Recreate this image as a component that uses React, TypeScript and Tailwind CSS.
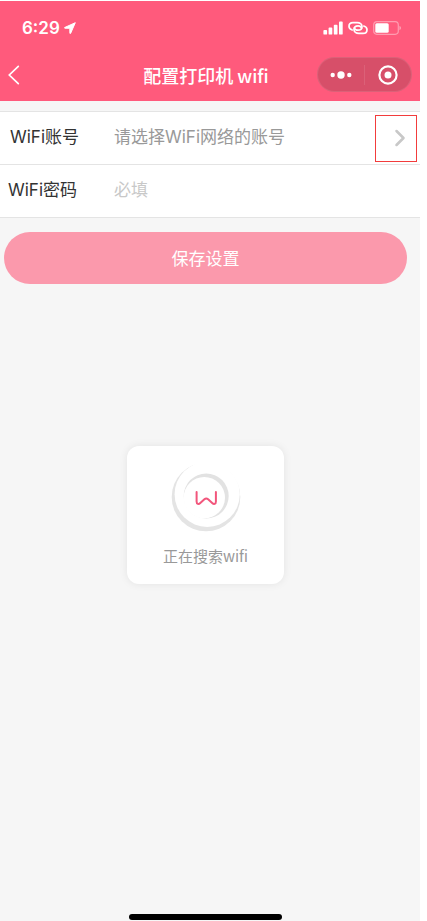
import { ChevronRight } from "lucide-react";

function StatusBar() {
  return (
    <div className="flex h-[54px] items-center justify-between pl-[22px] pr-[11px] text-white">
      <div className="flex items-center gap-1">
        <span className="font-['Inter','Liberation_Sans',sans-serif] text-[17px] font-semibold leading-6">6:29</span>
        <svg width="12" height="12" viewBox="0 0 12 12" fill="currentColor" stroke="currentColor" strokeWidth="1" strokeLinejoin="round" aria-hidden="true">
          <path d="M11.300.7.7 5.500c-.3.200-.3.700.1.700l5 .1.1 5c0 .4.500.4.700.1Z" />
        </svg>
      </div>
      <div className="flex items-center gap-[5px]">
        <svg width="20" height="14" viewBox="0 0 20 14" fill="currentColor" aria-hidden="true">
          <rect x="0.4" y="9" width="3.7" height="4.600" rx="0.9" />
          <rect x="5.600" y="6.600" width="3.700" height="7" rx="0.9" />
          <rect x="10.800" y="3.800" width="3.700" height="9.800" rx="0.9" />
          <rect x="16" y="0.600" width="3.700" height="13" rx="0.9" />
        </svg>
        <svg width="20" height="14" viewBox="0 0 20 14" fill="none" stroke="currentColor" strokeWidth="1.7" strokeLinecap="round" aria-hidden="true">
          <path d="M4.200 9C2.200 8.400 1 7 1 5.300 1 3.100 2.700 1.600 5 1.600h4.200c2.700 0 4.800 1.600 4.800 3.900 0 2.200-1.800 3.700-4.100 3.700-1.700 0-3.100-.8-3.500-2.200" />
          <path d="M15.800 5c2 .6 3.200 2 3.200 3.700 0 2.200-1.700 3.700-4 3.700h-4.200C8.100 12.400 6 10.800 6 8.500c0-2.200 1.800-3.700 4.100-3.700 1.700 0 3.100.8 3.500 2.200" />
        </svg>
        <svg width="28" height="14" viewBox="0 0 28 14" fill="none" aria-hidden="true">
          <rect x="0.7" y="0.7" width="24.600" height="12.600" rx="3.200" stroke="white" strokeOpacity="0.4" strokeWidth="1.2" />
          <rect x="2.300" y="2.300" width="13.400" height="9.400" rx="1.500" fill="white" />
          <path d="M26.500 5v4c.9-.3 1.300-1.100 1.300-2s-.4-1.700-1.300-2Z" fill="white" fillOpacity="0.5" />
        </svg>
      </div>
    </div>
  );
}

function NavBar() {
  return (
    <div className="grid h-[46px] grid-cols-[1fr_auto_1fr] items-start text-white">
      <button type="button" aria-label="返回" className="flex h-10 w-8 items-center pl-2">
        <svg width="12" height="20" viewBox="0 0 12 20" fill="none" stroke="currentColor" strokeWidth="1.700" strokeLinecap="round" aria-hidden="true">
          <path d="m10.300 1.300-9 8.700 9 8.700" />
        </svg>
      </button>
      <h1 className="text-lg font-medium leading-10">配置打印机 wifi</h1>
      <div className="mt-0.5 flex h-[35px] w-[95px] items-center justify-self-end rounded-full border border-white/10 bg-[#d74f69]">
        <button type="button" aria-label="更多" className="flex h-full flex-1 items-center justify-center">
          <svg width="22" height="8" viewBox="0 0 22 8" fill="currentColor" aria-hidden="true">
            <circle cx="2.700" cy="4" r="2.200" />
            <circle cx="11" cy="4" r="3.700" />
            <circle cx="19.300" cy="4" r="2.200" />
          </svg>
        </button>
        <span className="h-5 w-px bg-white/10" />
        <button type="button" aria-label="关闭" className="flex h-full flex-1 items-center justify-center">
          <svg width="20" height="20" viewBox="0 0 20 20" aria-hidden="true">
            <circle cx="10" cy="10" r="8.600" fill="none" stroke="currentColor" strokeWidth="2.200" />
            <circle cx="10" cy="10" r="3.500" fill="currentColor" />
          </svg>
        </button>
      </div>
    </div>
  );
}

function Spinner() {
  return (
    <svg width="70" height="70" viewBox="0 0 70 70" aria-hidden="true">
      <circle cx="35" cy="35" r="34.300" fill="#e4e4e4" />
      <circle cx="36.200" cy="32.300" r="32.600" fill="white" />
      <circle cx="35.200" cy="34" r="22.500" fill="#e2e2e2" />
      <circle cx="33.300" cy="35.600" r="20.700" fill="white" />
      <path
        d="M25.600 30v9.500c0 2.700 2 3.200 3.700 1.500l4.100-3.700c1.300-1.200 2.400-1.200 3.700 0l4.100 3.700c1.700 1.700 3.700 1.200 3.700-1.500V30"
        fill="none"
        stroke="#f2567c"
        strokeWidth="2"
        strokeLinecap="round"
      />
    </svg>
  );
}

export default function App() {
  return (
    <div className="min-h-screen bg-white pr-[7px] pt-px font-['Noto_Sans_CJK_SC',sans-serif]">
      <div className="flex min-h-[calc(100vh-1px)] flex-col bg-[#f6f6f6]">
        <header className="bg-[#ff5a7c] pr-2">
          <StatusBar />
          <NavBar />
        </header>

        <form className="mt-2.5">
          <div className="border-y border-[#e4e4e4] bg-white font-['Inter','Noto_Sans_CJK_SC',sans-serif] text-[17px]">
            <div className="flex h-[53px] items-center border-b border-[#e4e4e4] pl-2.5 pr-[3px]">
              <label htmlFor="ssid" className="w-[104px] text-[#333]">WiFi账号</label>
              <input
                id="ssid"
                readOnly
                placeholder="请选择WiFi网络的账号"
                className="min-w-0 flex-1 bg-transparent outline-none placeholder:text-[#999]"
              />
              <button
                type="button"
                aria-label="选择网络"
                className="flex h-[47px] w-[42px] items-center justify-end border border-[#f23c3c] pr-0.5"
              >
                <ChevronRight className="h-7 w-7 text-[#c8c8c8]" strokeWidth={2.2} />
              </button>
            </div>
            <div className="flex h-[52px] items-center pl-2 pr-[3px]">
              <label htmlFor="password" className="w-[106px] text-[#333]">WiFi密码</label>
              <input
                id="password"
                type="password"
                placeholder="必填"
                className="min-w-0 flex-1 bg-transparent outline-none placeholder:text-[#c8c8c8]"
              />
            </div>
          </div>
          <div className="pl-1 pr-[13px] pt-3.5">
            <button type="submit" className="h-[52px] w-full rounded-full bg-[#fb99ac] text-[17px] text-white">
              保存设置
            </button>
          </div>
        </form>

        <div className="flex flex-1 flex-col items-center justify-between pr-[9px] pt-[162px]">
          <div role="status" className="flex h-[138px] w-[157px] flex-col items-center rounded-xl bg-white pt-4 shadow-[0_0_8px_rgba(0,0,0,0.08)]">
            <Spinner />
            <p className="mt-3 text-[15px] leading-6 text-[#999]">正在搜索wifi</p>
          </div>
          <div className="mb-px h-1.5 w-[153px] rounded-full bg-black" />
        </div>
      </div>
    </div>
  );
}
